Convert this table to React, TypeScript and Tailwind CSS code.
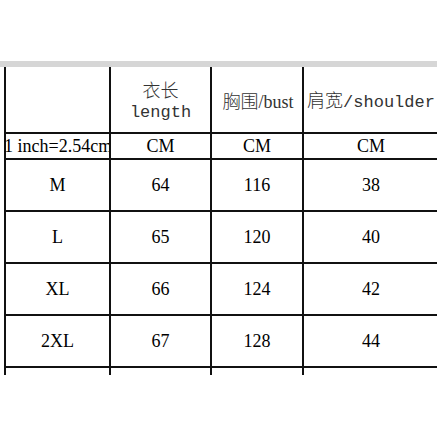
import React from "react";

const serif = "font-['Liberation_Serif','Times_New_Roman',serif]";
const cjk = "font-['Noto_Sans_CJK_SC',sans-serif] font-light";
const mono = "font-['Liberation_Mono',monospace]";

const cols = ["w-[105px]", "w-[101px]", "w-[92px]", "w-[140px]"];

function Row({ h, cells, last }: { h: string; cells: React.ReactNode[]; last?: boolean }) {
  return (
    <div className={`flex ${h}`}>
      {cells.map((c, i) => (
        <div
          key={i}
          className={`${cols[i]} shrink-0 border-l-2 border-[#111] ${last ? "" : "border-b-2"} flex items-center justify-center`}
        >
          {c}
        </div>
      ))}
    </div>
  );
}

export default function App() {
  const data = [
    ["M", "64", "116", "38"],
    ["L", "65", "120", "40"],
    ["XL", "66", "124", "42"],
    ["2XL", "67", "128", "44"],
  ];
  return (
    <div className="w-[437px] h-[437px] bg-white overflow-hidden pt-[61px]">
      <div className="h-[6px] bg-[#d6d6d6] w-full" />
      <div className="pl-[4px] w-[480px]">
        <Row
          h="h-[67px]"
          cells={[
            null,
            <div className="flex flex-col items-center text-[#333] leading-[24px] mt-[3px]">
              <span className={`${cjk} text-[18px]`}>衣长</span>
              <span className={`${mono} text-[17px]`}>length</span>
            </div>,
            <div className="text-[#333] whitespace-nowrap mt-[3px] ml-[2px]">
              <span className={`${cjk} text-[18px]`}>胸围</span>
              <span className={`${serif} text-[18px]`}>/bust</span>
            </div>,
            <div className="text-[#333] whitespace-nowrap mt-[3px] ml-[-4px]">
              <span className={`${cjk} text-[18px]`}>肩宽</span>
              <span className={`${mono} text-[17px]`}>/shoulder</span>
            </div>,
          ]}
        />
        <Row
          h="h-[26px]"
          cells={[
            <div className="w-full h-full flex items-center [clip-path:inset(0_0_0_-10px)]">
              <span className={`${serif} text-[18px] text-black whitespace-nowrap ml-[-2px]`}>
                1 inch=2.54cm
              </span>
            </div>,
            <span className={`${serif} text-[18px] text-black`}>CM</span>,
            <span className={`${serif} text-[18px] text-black`}>CM</span>,
            <span className={`${serif} text-[18px] text-black ml-[-4px]`}>CM</span>,
          ]}
        />
        {data.map((r) => (
          <Row
            key={r[0]}
            h="h-[52px]"
            cells={r.map((v, i) => (
              <span className={`${serif} text-[18px] text-black ${i === 3 ? "ml-[-4px]" : ""}`}>{v}</span>
            ))}
          />
        ))}
        <Row h="h-[7px]" last cells={[null, null, null, null]} />
      </div>
    </div>
  );
}
